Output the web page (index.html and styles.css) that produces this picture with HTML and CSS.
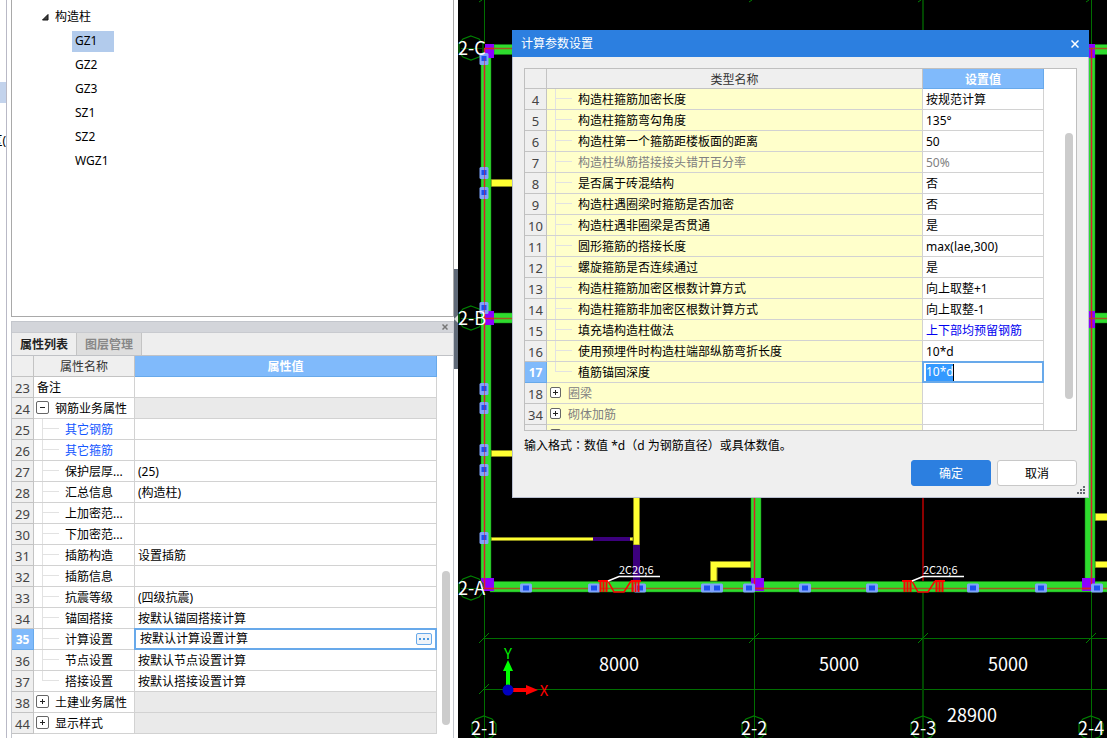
FILE: index.html
```html
<!DOCTYPE html>
<html lang="zh-CN">
<head>
<meta charset="utf-8">
<title>计算参数设置</title>
<link rel="stylesheet" href="styles.css">
</head>
<body>
<main class="app">
  <aside class="nav-edge"><div class="nav-mark"></div><div class="nav-text">区(</div></aside>

  <section class="side">
    <div class="tree">
      <div class="tree-root"><svg class="caret" viewBox="0 0 7 7"><path d="M6 0.500V6H0.500Z" fill="#404040" stroke="#111"/></svg>构造柱</div>
      <ul class="tree-list">
        <li><span class="tree-item selected">GZ1</span></li>
        <li><span class="tree-item">GZ2</span></li>
        <li><span class="tree-item">GZ3</span></li>
        <li><span class="tree-item">SZ1</span></li>
        <li><span class="tree-item">SZ2</span></li>
        <li><span class="tree-item">WGZ1</span></li>
      </ul>
    </div>
    <div class="dock">
      <div class="dock-bar"><button class="dock-close" aria-label="关闭面板"><svg viewBox="0 0 6 6"><path d="M0.500 0.500L5.500 5.500M5.500 0.500L0.500 5.500" stroke="#777" stroke-width="1.500"/></svg></button></div>
      <div class="tabs" role="tablist">
        <button class="tab active" role="tab">属性列表</button>
        <button class="tab" role="tab">图层管理</button>
      </div>
      <div class="dock-body">
        <table class="grid props">
          <thead><tr><th class="num"></th><th class="name">属性名称</th><th class="value hot">属性值</th></tr></thead>
          <tbody>
            <tr><td class="num">23</td><td class="flat">备注</td><td></td></tr>
            <tr class="group"><td class="num">24</td><td class="head"><button class="box minus" aria-label="折叠"></button>钢筋业务属性</td><td></td></tr>
            <tr><td class="num">25</td><td class="leaf link"><i class="branch"></i>其它钢筋</td><td></td></tr>
            <tr><td class="num">26</td><td class="leaf link"><i class="branch"></i>其它箍筋</td><td></td></tr>
            <tr><td class="num">27</td><td class="leaf"><i class="branch"></i>保护层厚...</td><td>(25)</td></tr>
            <tr><td class="num">28</td><td class="leaf"><i class="branch"></i>汇总信息</td><td>(构造柱)</td></tr>
            <tr><td class="num">29</td><td class="leaf"><i class="branch"></i>上加密范...</td><td></td></tr>
            <tr><td class="num">30</td><td class="leaf"><i class="branch"></i>下加密范...</td><td></td></tr>
            <tr><td class="num">31</td><td class="leaf"><i class="branch"></i>插筋构造</td><td>设置插筋</td></tr>
            <tr><td class="num">32</td><td class="leaf"><i class="branch"></i>插筋信息</td><td></td></tr>
            <tr><td class="num">33</td><td class="leaf"><i class="branch"></i>抗震等级</td><td>(四级抗震)</td></tr>
            <tr><td class="num">34</td><td class="leaf"><i class="branch"></i>锚固搭接</td><td>按默认锚固搭接计算</td></tr>
            <tr class="current"><td class="num">35</td><td class="leaf"><i class="branch"></i>计算设置</td><td class="edit"><div class="editor"><input class="field" type="text" aria-label="计算设置" value="按默认计算设置计算"><button class="more" aria-label="更多"><i></i><i></i><i></i></button></div></td></tr>
            <tr><td class="num">36</td><td class="leaf"><i class="branch"></i>节点设置</td><td>按默认节点设置计算</td></tr>
            <tr><td class="num">37</td><td class="leaf"><i class="branch last"></i>搭接设置</td><td>按默认搭接设置计算</td></tr>
            <tr class="group"><td class="num">38</td><td class="head"><button class="box" aria-label="展开"></button>土建业务属性</td><td></td></tr>
            <tr class="group"><td class="num">44</td><td class="head"><button class="box" aria-label="展开"></button>显示样式</td><td></td></tr>
          </tbody>
        </table>
        <div class="gutter"><div class="thumb props-thumb"></div></div>
      </div>
    </div>
  </section>

  <div class="splitter"><div class="grip"><svg viewBox="0 0 4 8"><path d="M4 0V8L0 4Z" fill="#ddd"/></svg></div></div>

  <section class="canvas">
    <svg class="drawing" viewBox="458 0 649 738" preserveAspectRatio="xMinYMin slice">
      <defs>
        <g id="hv"><rect x="-4.500" y="-6" width="9" height="12" rx="1.500" fill="#7fa3fb"/><rect x="-2.500" y="-3" width="5" height="5" fill="#1c50ee"/></g>
        <g id="hh"><rect x="-6" y="-4.500" width="12" height="9" rx="1.500" fill="#7fa3fb"/><rect x="-3" y="-2.500" width="6" height="5" fill="#1c50ee"/></g>
        <path id="oct" d="M0 -12L8 -9L12 -4V4L8 9L0 12L-8 9L-12 4V-4L-8 -9Z" fill="none" stroke="#008000" stroke-width="1.200"/>
        <path id="tick" d="M-5 5L5 -5" stroke="#008000"/>
        <g id="rebar">
          <path d="M598 581H608M600.500 581V592M603.500 581V592M606.500 581V592M631 581H641M632.500 581V592M635.500 581V592M638.500 581V592" stroke="#f00" stroke-width="2"/>
          <path d="M608 581L614 592H624L631 581" fill="none" stroke="#f00" stroke-width="1.500"/>
          <path d="M608 581L619 576.500H660" fill="none" stroke="#fff" stroke-width="1.500"/>
        </g>
      </defs>
      <rect x="458" width="649" height="738" fill="#000"/>
      <g fill="#ffff32" stroke="#8a8a1a">
        <path d="M491 179.500H520V186.500H491ZM491 450.500H520V456.500H491ZM491 537.500H633V540.500H491Z"/>
        <path d="M633.500 490H639.500V545H633.500ZM710.500 581V561.500H751V567.500H717V581ZM1095 513.500H1110V520.500H1095ZM1095 561.500H1110V567.500H1095Z"/>
      </g>
      <path d="M633 545H640V581H633ZM593 537H630V541H593Z" fill="#3c007d"/>
      <g fill="#2edc2e" stroke="#148214" stroke-width="0.500">
        <path d="M481 54H491V581H481ZM751 490H761V581H751ZM1085 54H1095V581H1085Z"/>
        <path d="M494 44.500H1110V54.500H494ZM490 313H1110V323H490ZM490 581.500H1110V592H490Z"/>
      </g>
      <path d="M485 44H494V58H485ZM485 311H494V325H485ZM481 578H494V591H481ZM751 578H764V591H751ZM1082 578H1095V591H1082ZM1085 44H1095V58H1085ZM1085 311H1095V328H1085Z" fill="#8c00ff"/>
      <path d="M490 48.500H1107M490 318.500H1107M494 588.500H1107" stroke="#a05a1e" stroke-width="1.500"/>
      <path d="M484.500 48V588M754.500 498V588M1091.500 48V588M484 48.500H494M484 318.500H494M484 588.500H494M754 588.500H764M1082 588.500H1092" stroke="#dc1e28" stroke-width="1.500"/>
      <path d="M923 498V581" stroke="#8c0000" stroke-width="2"/>
      <path d="M484.500 0V44M484.500 592V738M754.500 592V738M1091.500 0V44M1091.500 592V738M484 638.500H1107M484 689.500H1107" stroke="#006e00"/>
      <path d="M923 0V44M923 592V738" stroke="#004600" stroke-width="2"/>
      <use href="#tick" x="484" y="638"/><use href="#tick" x="754" y="638"/><use href="#tick" x="923" y="638"/><use href="#tick" x="1091" y="638"/><use href="#tick" x="484" y="689"/>
      <path d="M479 2L482 0M749 2L752 0M918 2L921 0M1086 2L1089 0" stroke="#008000"/>
      <use href="#oct" x="471" y="48"/><use href="#oct" x="471" y="318"/><use href="#oct" x="471" y="588"/>
      <use href="#oct" x="484" y="728"/><use href="#oct" x="754" y="728"/><use href="#oct" x="923" y="728"/><use href="#oct" x="1091" y="728"/>
      <path d="M461 48.500H484M461 318.500H484M461 588.500H484" stroke="#005000"/>
      <use href="#hv" x="484" y="59"/><use href="#hv" x="484" y="173"/><use href="#hv" x="484" y="193"/><use href="#hv" x="484" y="308"/><use href="#hv" x="484" y="389"/><use href="#hv" x="484" y="408"/><use href="#hv" x="484" y="450"/><use href="#hv" x="484" y="470"/><use href="#hv" x="484" y="538"/>
      <use href="#hh" x="526" y="588"/><use href="#hh" x="594" y="588"/><use href="#hh" x="640" y="588"/><use href="#hh" x="707" y="588"/><use href="#hh" x="717" y="588"/><use href="#hh" x="749" y="588"/><use href="#hh" x="805" y="588"/><use href="#hh" x="872" y="588"/><use href="#hh" x="973" y="588"/><use href="#hh" x="1041" y="588"/><use href="#hh" x="1097" y="588"/>
      <path d="M484.500 58V578" stroke="#dc1e28" stroke-opacity="0.500"/>
      <use href="#rebar"/><use href="#rebar" x="304"/>
      <g class="cad-text">
        <text x="458" y="55">2-C</text><text x="458" y="325">2-B</text><text x="458" y="595">2-A</text>
        <text x="471" y="735">2-1</text><text x="741" y="735">2-2</text><text x="910" y="735">2-3</text><text x="1078" y="735">2-4</text>
        <text x="599" y="671">8000</text><text x="819" y="671">5000</text><text x="988" y="671">5000</text><text x="947" y="722">28900</text>
      </g>
      <g class="cad-note"><text x="619" y="574">2C20;6</text><text x="923" y="574">2C20;6</text></g>
      <path d="M506 670H510V686H506Z" fill="#0f0"/><path d="M508 660L513 671H503Z" fill="#0f0"/>
      <path d="M513 688H526V692H513Z" fill="#f00"/><path d="M538 690L526 685V695Z" fill="#f00"/>
      <circle cx="508" cy="690" r="5.500" fill="#0000be"/>
      <g class="cad-axis"><text x="508" y="659" fill="#0e0">Y</text><text x="544" y="696" fill="#f00">X</text></g>
    </svg>

    <section class="dialog" role="dialog" aria-labelledby="dialog-title">
      <header class="dialog-bar"><h1 class="dialog-title" id="dialog-title">计算参数设置</h1><button class="dialog-close" aria-label="关闭"><svg viewBox="0 0 8 8"><path d="M0.500 0.500L7.500 7.500M7.500 0.500L0.500 7.500" stroke="#fff" stroke-width="1.500"/></svg></button></header>
      <div class="dialog-body">
        <div class="sheet">
          <table class="grid params">
            <thead><tr><th class="num"></th><th class="name">类型名称</th><th class="value hot">设置值</th></tr></thead>
            <tbody>
              <tr><td class="num">4</td><td class="leaf"><i class="branch"></i>构造柱箍筋加密长度</td><td>按规范计算</td></tr>
              <tr><td class="num">5</td><td class="leaf"><i class="branch"></i>构造柱箍筋弯勾角度</td><td>135°</td></tr>
              <tr><td class="num">6</td><td class="leaf"><i class="branch"></i>构造柱第一个箍筋距楼板面的距离</td><td>50</td></tr>
              <tr class="muted"><td class="num">7</td><td class="leaf"><i class="branch"></i>构造柱纵筋搭接接头错开百分率</td><td>50%</td></tr>
              <tr><td class="num">8</td><td class="leaf"><i class="branch"></i>是否属于砖混结构</td><td>否</td></tr>
              <tr><td class="num">9</td><td class="leaf"><i class="branch"></i>构造柱遇圈梁时箍筋是否加密</td><td>否</td></tr>
              <tr><td class="num">10</td><td class="leaf"><i class="branch"></i>构造柱遇非圈梁是否贯通</td><td>是</td></tr>
              <tr><td class="num">11</td><td class="leaf"><i class="branch"></i>圆形箍筋的搭接长度</td><td>max(lae,300)</td></tr>
              <tr><td class="num">12</td><td class="leaf"><i class="branch"></i>螺旋箍筋是否连续通过</td><td>是</td></tr>
              <tr><td class="num">13</td><td class="leaf"><i class="branch"></i>构造柱箍筋加密区根数计算方式</td><td>向上取整+1</td></tr>
              <tr><td class="num">14</td><td class="leaf"><i class="branch"></i>构造柱箍筋非加密区根数计算方式</td><td>向上取整-1</td></tr>
              <tr><td class="num">15</td><td class="leaf"><i class="branch"></i>填充墙构造柱做法</td><td class="changed">上下部均预留钢筋</td></tr>
              <tr><td class="num">16</td><td class="leaf"><i class="branch"></i>使用预埋件时构造柱端部纵筋弯折长度</td><td>10*d</td></tr>
              <tr class="current"><td class="num">17</td><td class="leaf"><i class="branch last"></i>植筋锚固深度</td><td class="edit"><div class="editor"><input class="field" id="depth" type="text" aria-label="植筋锚固深度" value="10*d"></div></td></tr>
              <tr class="muted"><td class="num">18</td><td class="head"><button class="box" aria-label="展开"></button>圈梁</td><td></td></tr>
              <tr class="muted"><td class="num">34</td><td class="head"><button class="box" aria-label="展开"></button>砌体加筋</td><td></td></tr>
              <tr class="muted"><td class="num"></td><td class="head"><button class="box" aria-label="展开"></button></td><td></td></tr>
            </tbody>
          </table>
          <div class="gutter"><div class="thumb params-thumb"></div></div>
        </div>
        <p class="hint">输入格式<span class="colon" lang="zh-TW">：</span>数值 *d（d 为钢筋直径）或具体数值。</p>
        <div class="actions"><button class="btn primary">确定</button><button class="btn">取消</button></div>
      </div>
      <svg class="resize" viewBox="0 0 8 8" fill="#666a72"><path d="M6 0h2v2h-2zM3 3h2v2h-2zM6 3h2v2h-2zM0 6h2v2h-2zM3 6h2v2h-2zM6 6h2v2h-2z"/></svg>
    </section>
  </section>
</main>
<script src="main.js"></script>
</body>
</html>
```
FILE: styles.css
```css
* { box-sizing: border-box; }
body {
  margin: 0;
  font: 12px/20px "Noto Sans", "Noto Sans CJK SC", sans-serif;
  color: #000;
  background: #fff;
}
button, input { font: inherit; color: inherit; padding: 0; margin: 0; border: 0; background: none; }
svg { display: block; }
.app { display: flex; height: 100vh; overflow: hidden; }

.nav-edge { width: 7px; flex: none; border-right: 1px solid #b9b9c6; overflow: hidden; padding-top: 82px; }
.nav-mark { height: 21px; background: #c3d3ec; margin-bottom: 28px; }
.nav-text { display: flex; justify-content: flex-end; white-space: nowrap; }

.side { width: 443px; flex: none; margin-left: 4px; display: flex; flex-direction: column; }
.tree { height: 317px; border: 1px solid #a9a9a9; border-top: 0; padding-top: 5px; }
.tree-root { display: flex; align-items: center; gap: 6px; height: 24px; padding-left: 30px; }
.caret { width: 7px; height: 7px; }
.tree-list { list-style: none; margin: 0; padding: 0 0 0 60px; }
.tree-list li { height: 24px; display: flex; align-items: center; }
.tree-item { padding: 0 3px; min-width: 42px; height: 21px; }
.tree-item.selected { background: #b2cbec; }

.dock { flex: 1; margin-top: 4px; display: flex; flex-direction: column; border: 1px solid #c3c6cc; border-bottom: 0; min-height: 0; }
.dock-bar { display: flex; justify-content: flex-end; align-items: center; height: 11px; padding-right: 5px; background: #d3d5da; border-bottom: 1px solid #c8cacf; }
.dock-close svg { width: 6px; height: 6px; }
.tabs { display: flex; height: 23px; background: #eee; border-bottom: 1px solid #c0c2c6; }
.tab { width: 65px; padding-top: 2px; font-weight: bold; color: #222; border-right: 1px solid #c4c4c4; }
.tab:not(.active) { background: #dedede; color: #888; }
.dock-body { flex: 1; display: flex; min-height: 0; overflow: hidden; }

.grid { border-spacing: 0; table-layout: fixed; flex: none; }
.grid th, .grid td {
  height: 21px; padding: 2px 3px 0; text-align: left; font-weight: normal; white-space: nowrap;
  line-height: 18px; overflow: hidden; border-right: 1px solid #d2d2d2; border-bottom: 1px solid #d2d2d2;
  vertical-align: top;
}
.grid th { background: #efefef; text-align: center; color: #333; border-color: #c3c3c3; }
.grid .num { width: 22px; padding: 2px 0 0; text-align: center; background: #efefef; color: #444; border-color: #c3c3c3; font-size: 13px; }
.grid .hot { background: #80bafb; color: #fff; border-color: #68a9ea; font-weight: bold; }
.props { width: 425px; height: 378px; }
.props .name { width: 101px; }
.params { width: 519px; height: 377px; }
.params .value { width: 121px; }
.params thead th { height: 20px; line-height: 17px; }
.params .leaf, .params .head { background: #ffffcb; }
.group td:last-child { background: #eaeaea; }
.grid .leaf { padding-left: 8px; }
.grid .link { color: #1457ff; }
.grid .changed { color: #0000f0; }
.grid .muted td:not(.num) { color: #808080; }
.branch {
  display: inline-block; width: 17px; height: 20px; margin: -2px 6px 0 0; vertical-align: top;
  background: linear-gradient(#e2e2e2, #e2e2e2) 0 9px / 17px 1px no-repeat, linear-gradient(#e2e2e2, #e2e2e2) 0 0 / 1px 20px no-repeat;
}
.branch.last { background-size: 17px 1px, 1px 10px; }
.box {
  width: 13px; height: 13px; margin: 1px 6px 0 0; vertical-align: top; border: 1px solid #666; border-radius: 2px;
  background: linear-gradient(#222, #222) center / 5px 1px no-repeat, linear-gradient(#222, #222) center / 1px 5px no-repeat, #fff;
}
.grid .head { padding-left: 2px; }
.params .box { width: 11px; height: 11px; margin: 2px 7px 0 1px; }
.box.minus { background: linear-gradient(#222, #222) center / 5px 1px no-repeat, #fff; }
.grid .current .num { background: #80bafb; color: #fff; font-weight: bold; border-color: #68a9ea; font-size: 12px; }
.grid .edit { padding: 0; border: 0; overflow: visible; }
.editor { position: relative; display: flex; align-items: center; height: 22px; margin: -1px 0 0 -1px; border: 2px solid #68a9ea; padding: 0 3px 0 4px; background: #fff; }
.params .editor { padding-left: 2px; }
.params .editor::after { content: ""; position: absolute; left: 29px; top: 1px; width: 1px; height: 17px; background: #000; }
.field { flex: 1; min-width: 0; height: 17px; outline: none; }
.field::selection { background: #3399ff; color: #fff; }
#depth { caret-color: transparent; }
.more { display: flex; gap: 2px; align-items: center; justify-content: center; width: 16px; height: 12px; border: 1px solid #68a9ea; border-radius: 2px; background: #eef3f9; }
.more i { width: 2px; height: 2px; background: #4a98e0; }
.gutter { flex: 1; display: flex; justify-content: flex-end; background: #fff; }
.thumb { width: 8px; border-radius: 4px; background: #ccc; }
.props-thumb { height: 154px; margin: 215px 3px 0 0; }
.params-thumb { height: 266px; margin: 64px 3px 0 0; }

.splitter { width: 4px; flex: none; padding-top: 269px; background: #fff; }
.grip { height: 100px; background: #606a78; display: flex; align-items: center; }
.grip svg { width: 4px; height: 8px; }

.canvas { flex: 1; min-width: 0; position: relative; background: #000; overflow: hidden; }
.drawing { width: 100%; height: 100%; }
.cad-text { font: 18px "Noto Sans CJK SC", sans-serif; fill: #fff; }
.cad-note { font: 11px "Noto Sans CJK SC", sans-serif; fill: #fff; }
.cad-axis { font: 15px "Noto Sans CJK SC", sans-serif; text-anchor: middle; }

.dialog { position: absolute; left: 54px; right: 18px; top: 30px; background: #efefef; border: 1px solid #b9bfd0; border-top: 0; }
.dialog-bar { display: flex; align-items: center; justify-content: space-between; height: 27px; margin: 0 -1px; padding: 0 10px 0 9px; background: #2c7fe0; color: #fff; }
.dialog-title { margin: 0; font-size: 12px; font-weight: normal; }
.dialog-close svg { width: 8px; height: 8px; }
.dialog-body { padding: 11px; }
.sheet { display: flex; height: 363px; overflow: hidden; border: 1px solid #bfbfbf; background: #fff; }
.hint { margin: 5px 0 4px; line-height: 20px; }
.colon { font-family: "Noto Sans CJK TC", sans-serif; line-height: 1; }
.actions { display: flex; justify-content: flex-end; gap: 6px; }
.btn { width: 80px; height: 26px; padding-top: 1px; border: 1px solid #c8c8c8; border-radius: 3px; background: #fff; }
.btn.primary { background: #2c7fe0; border-color: #2c7fe0; color: #fff; }
.resize { position: absolute; right: 3px; bottom: 3px; width: 8px; height: 8px; }
```
FILE: main.js
```js
const depth = document.getElementById("depth");
depth.focus({ preventScroll: true });
depth.select();
```
